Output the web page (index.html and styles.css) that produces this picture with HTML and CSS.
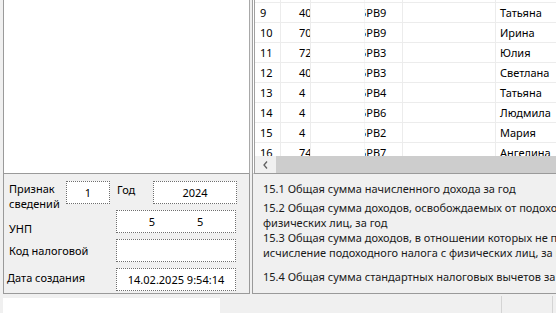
FILE: index.html
```html
<!DOCTYPE html>
<html lang="ru">
<head>
    <meta charset="UTF-8">
    <meta name="viewport" content="width=device-width, initial-scale=1.0">
    <title>Справка о доходах</title>
    <link rel="stylesheet" href="styles.css">
</head>
<body>
    <div class="window">
        <div class="preview-panel"></div>

        <div class="grid-panel">
            <div class="grid-rows">
                <div class="grid-list">
                    <div class="row"><div class="c-num"></div><div class="c-a"></div><div class="c-e"></div><div class="c-b"></div><div class="c-c"></div><div class="c-name"></div></div>
                    <div class="row"><div class="c-num">9</div><div class="c-a">40(0</div><div class="c-e"></div><div class="c-b">5PB9</div><div class="c-c"></div><div class="c-name">Татьяна</div></div>
                    <div class="row"><div class="c-num">10</div><div class="c-a">70(0</div><div class="c-e"></div><div class="c-b">5PB9</div><div class="c-c"></div><div class="c-name">Ирина</div></div>
                    <div class="row"><div class="c-num">11</div><div class="c-a">72:0</div><div class="c-e"></div><div class="c-b">5PB3</div><div class="c-c"></div><div class="c-name">Юлия</div></div>
                    <div class="row"><div class="c-num">12</div><div class="c-a">40(0</div><div class="c-e"></div><div class="c-b">5PB3</div><div class="c-c"></div><div class="c-name">Светлана</div></div>
                    <div class="row"><div class="c-num">13</div><div class="c-a">4</div><div class="c-e"></div><div class="c-b">5PB4</div><div class="c-c"></div><div class="c-name">Татьяна</div></div>
                    <div class="row"><div class="c-num">14</div><div class="c-a">4</div><div class="c-e"></div><div class="c-b">5PB6</div><div class="c-c"></div><div class="c-name">Людмила</div></div>
                    <div class="row"><div class="c-num">15</div><div class="c-a">4</div><div class="c-e"></div><div class="c-b">5PB2</div><div class="c-c"></div><div class="c-name">Мария</div></div>
                    <div class="row"><div class="c-num">16</div><div class="c-a">74</div><div class="c-e"></div><div class="c-b">5PB7</div><div class="c-c"></div><div class="c-name">Ангелина</div></div>
                </div>
            </div>
            <div class="hscroll">
                <div class="hscroll-btn">
                    <svg width="5" height="8" viewBox="0 0 5 8"><path d="M4 0.5 L1 4 L4 7.5" fill="none" stroke="#606060" stroke-width="1.3"/></svg>
                </div>
                <div class="hscroll-thumb"></div>
            </div>
        </div>

        <div class="form-panel">
            <div class="form-row">
                <div class="lbl lbl-sign">Признак<br>сведений</div>
                <div class="box box-sign">1</div>
                <div class="lbl lbl-year">Год</div>
                <div class="box box-year">2024</div>
            </div>
            <div class="form-row">
                <div class="lbl lbl-wide lbl-unp">УНП</div>
                <div class="box box-wide"><span>5</span><span>5</span></div>
            </div>
            <div class="form-row">
                <div class="lbl lbl-wide lbl-mid">Код налоговой</div>
                <div class="box box-wide"></div>
            </div>
            <div class="form-row">
                <div class="lbl lbl-wide lbl-date">Дата создания</div>
                <div class="box box-wide">14.02.2025 9:54:14</div>
            </div>
        </div>

        <div class="info-panel">
            <div class="info-item">15.1 Общая сумма начисленного дохода за год</div>
            <div class="info-item i2">15.2 Общая сумма доходов, освобождаемых от подоходного налога с<br>физических лиц, за год</div>
            <div class="info-item i3">15.3 Общая сумма доходов, в отношении которых не производится<br>исчисление подоходного налога с физических лиц, за год</div>
            <div class="info-item i4">15.4 Общая сумма стандартных налоговых вычетов за год</div>
        </div>

        <div class="bottom-left"><div class="bottom-box"></div></div>
        <div class="bottom-right">
            <div class="bottom-cell"></div>
            <div class="bottom-cell last"></div>
        </div>
    </div>
</body>
</html>
```

FILE: styles.css
```css
body {
    margin: 0;
    background-color: #f0f0f0;
    font-family: "Noto Sans", "Open Sans", sans-serif;
    font-size: 11px;
    color: #000;
    overflow: hidden;
}

.window {
    display: grid;
    grid-template-columns: 247px 307px;
    grid-template-rows: 174px 120px 19px;
    column-gap: 2px;
    padding-left: 3px;
    height: 313px;
}

/* top left: empty white area */
.preview-panel {
    background-color: #fff;
    border-left: 1px solid #9a9a9a;
    border-right: 1px solid #a8a8a8;
    border-bottom: 1px solid #9a9a9a;
}

/* top right: data grid */
.grid-panel {
    display: flex;
    flex-direction: column;
    background-color: #fff;
    border-left: 3px double #a0a0a0;
    border-bottom: 1px solid #9a9a9a;
    overflow: hidden;
}

.grid-rows {
    flex: 1;
    overflow: hidden;
}

.grid-list {
    margin-top: -17px;
}

.row {
    display: flex;
    height: 19px;
    line-height: 19px;
    border-bottom: 1px solid #ececec;
    white-space: nowrap;
}

.row > div {
    overflow: hidden;
    border-right: 1px solid #ececec;
    box-sizing: border-box;
}

.c-num {
    width: 26px;
    padding-left: 5px;
}

.c-a {
    width: 30px;
    padding-left: 18px;
}

.c-e {
    width: 54px;
    border-right-color: #f6f6f6 !important;
}

.c-b {
    width: 38px;
    text-indent: -5px;
}

.c-c {
    width: 93px;
}

.c-name {
    flex: 1;
    padding-left: 4px;
    border-right: none !important;
}

.hscroll {
    display: flex;
    height: 17px;
    background-color: #f0f0f0;
}

.hscroll-btn {
    width: 20px;
    display: flex;
    align-items: center;
    justify-content: center;
}

.hscroll-thumb {
    flex: 1;
    margin-left: 1px;
    background-color: #cdcdcd;
}

/* bottom left: header fields */
.form-panel {
    display: flex;
    flex-direction: column;
    gap: 6px;
    padding: 7px 0 0 5px;
    border-left: 1px solid #9a9a9a;
    border-right: 1px solid #9a9a9a;
    border-bottom: 1px solid #9a9a9a;
}

.form-row {
    display: flex;
    align-items: flex-start;
    height: 23px;
}

.lbl {
    line-height: 15px;
}

.lbl-sign {
    width: 57px;
}

.lbl-year {
    width: 36px;
    margin-left: 7px;
    padding-top: 1px;
}

.lbl-wide {
    width: 107px;
}

.lbl-unp {
    padding-top: 11px;
}

.lbl-mid {
    padding-top: 4px;
}

.lbl-date {
    margin-left: -2px;
    width: 109px;
    padding-top: 2px;
}

.box {
    box-sizing: border-box;
    height: 23px;
    line-height: 21px;
    background-color: #fff;
    border: 1px dotted #6e6e6e;
    text-align: center;
}

.box-sign {
    width: 44px;
}

.box-year {
    width: 84px;
}

.box-wide {
    width: 120px;
}

.box-wide span + span {
    margin-left: 42px;
}

/* bottom right: income lines */
.info-panel {
    display: flex;
    flex-direction: column;
    padding: 7px 0 0 10px;
    border-left: 1px solid #9a9a9a;
    border-bottom: 1px solid #9a9a9a;
    overflow: hidden;
    color: #1a1a1a;
}

.info-item {
    line-height: 15px;
    white-space: nowrap;
}

.i2 {
    margin-top: 4px;
}

.i4 {
    margin-top: 9px;
}

.bottom-left {
    padding-top: 4px;
}

.bottom-box {
    width: 217px;
    height: 15px;
    background-color: #fff;
}

.bottom-right {
    display: flex;
    justify-content: flex-end;
    padding-top: 2px;
}

.bottom-cell {
    width: 50px;
    border-left: 1px solid #d4d4d4;
}

.bottom-cell.last {
    width: 6px;
}
```
